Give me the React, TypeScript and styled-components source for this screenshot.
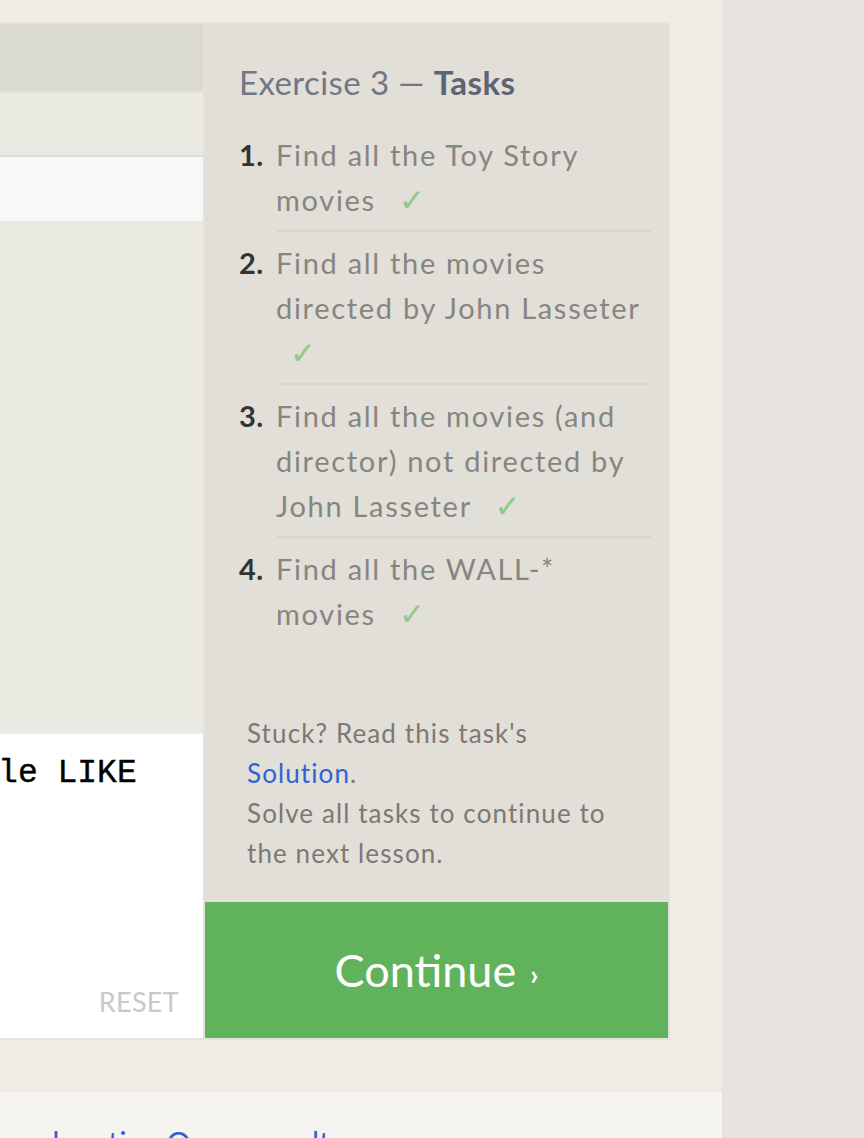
import React from "react";
import styled, { createGlobalStyle } from "styled-components";

const Global = createGlobalStyle`
  html, body { margin: 0; padding: 0; }
  body {
    background: #e6e2df;
    font-family: Lato, "Open Sans", sans-serif;
    overflow: hidden;
    width: 864px;
    height: 1138px;
  }
`;

const Page = styled.div`
  display: flex;
  width: 1360px;
  margin-left: -638px;
`;

const Column = styled.div`
  width: 1360px;
  display: flex;
  flex-direction: column;
`;

const Exercise = styled.section`
  background: #efece5;
  padding: 22px 52px 52px 20px;
  border-bottom-right-radius: 6px;
`;

const Box = styled.div`
  display: grid;
  grid-template-columns: 1fr 463px;
  gap: 2px;
  padding: 2px;
  background: #e4e2db;
`;

const LeftPane = styled.div`
  display: flex;
  flex-direction: column;
  background: #eae9e2;
  overflow: hidden;
`;

const TableHead = styled.div`
  height: 67px;
  background: #dadad3;
  border-bottom: 2px solid #e2e1dc;
`;

const TableRow = styled.div<{ $light?: boolean }>`
  height: 62px;
  background: ${(p) => (p.$light ? "#f8f8f8" : "#eae9e2")};
  border-bottom: 2px solid ${(p) => (p.$light ? "transparent" : "#dcdcd8")};
`;

const Filler = styled.div`
  height: 513px;
`;

const Editor = styled.div`
  height: 304px;
  background: #ffffff;
  display: flex;
  flex-direction: column;
  padding: 20px 24px 20px 20px;
  box-sizing: border-box;
`;

const Code = styled.pre`
  margin: 0;
  font-family: "Liberation Mono", "Courier New", monospace;
  font-size: 33px;
  line-height: 40px;
  color: #000;
  flex: 1;
  -webkit-text-stroke: 0.4px #000;
`;

const Reset = styled.div`
  align-self: flex-end;
  font-family: Lato, sans-serif;
  font-size: 27px;
  line-height: 32px;
  color: #c9c9c9;
  letter-spacing: 0.3px;
`;

const Panel = styled.aside`
  background: #e1dfd7;
  display: flex;
  flex-direction: column;
`;

const Heading = styled.h2`
  margin: 0;
  padding: 36px 16px 0 34px;
  font-size: 33px;
  line-height: 44px;
  font-weight: 400;
  letter-spacing: 0.4px;
  color: #717787;
`;

const Strong = styled.span`
  font-weight: 700;
  color: #5e6473;
`;

const Tasks = styled.ol`
  list-style: none;
  margin: 0;
  padding: 20px 16px 0 34px;
`;

const Task = styled.li`
  display: flex;
  font-size: 29px;
  line-height: 45px;
  letter-spacing: 1.7px;
`;

const Num = styled.span`
  width: 37px;
  flex: none;
  padding-top: 8px;
  font-weight: 700;
  letter-spacing: 0.5px;
  color: #333333;
`;

const TaskBody = styled.div<{ $last?: boolean }>`
  flex: 1;
  color: #878580;
  padding: 8px 0 7px;
  border-bottom: ${(p) => (p.$last ? "none" : "2px solid #d9d6cb")};
`;

const Check = styled.span`
  display: inline-block;
  margin-left: 14px;
  color: #8fca8c;
  font-family: "DejaVu Sans", sans-serif;
  font-size: 31px;
  letter-spacing: 0;
`;

const Help = styled.p`
  margin: 69px 0 0;
  padding: 0 42px 0 42px;
  font-size: 26px;
  line-height: 40px;
  letter-spacing: 1.1px;
  color: #7d7874;
`;

const Link = styled.a`
  color: #2d63d6;
  text-decoration: none;
`;

const Continue = styled.button`
  margin-top: auto;
  height: 136px;
  border: none;
  background: #61b35b;
  color: #ffffff;
  font-family: Lato, sans-serif;
  font-size: 45px;
  display: flex;
  align-items: center;
  justify-content: center;
  gap: 14px;
`;

const Chevron = styled.span`
  font-size: 28px;
  font-weight: 700;
  position: relative;
  top: 4px;
`;

const Next = styled.section`
  background: #f5f4f0;
  height: 46px;
  overflow: hidden;
  padding: 32px 0 0 533px;
  box-sizing: border-box;
`;

const NextTitle = styled.h3`
  margin: 0;
  font-size: 30px;
  font-weight: 400;
  color: #2d63d6;
  line-height: 36px;
  white-space: nowrap;
`;

const tasks: { text: string }[] = [
  { text: "Find all the Toy Story movies" },
  { text: "Find all the movies directed by John Lasseter" },
  { text: "Find all the movies (and director) not directed by John Lasseter" },
  { text: "Find all the WALL-* movies" },
];

export default function App() {
  return (
    <>
      <Global />
      <Page>
        <Column>
          <Exercise>
            <Box>
              <LeftPane>
                <TableHead />
                <TableRow />
                <TableRow $light />
                <Filler />
                <Editor>
                  <Code>SELECT * FROM movies WHERE title LIKE</Code>
                  <Reset>RESET</Reset>
                </Editor>
              </LeftPane>
              <Panel>
                <Heading>
                  Exercise 3 — <Strong>Tasks</Strong>
                </Heading>
                <Tasks>
                  {tasks.map((t, i) => (
                    <Task key={i}>
                      <Num>{i + 1}.</Num>
                      <TaskBody $last={i === tasks.length - 1}>
                        {t.text} <Check>✓</Check>
                      </TaskBody>
                    </Task>
                  ))}
                </Tasks>
                <Help>
                  Stuck? Read this task's <Link href="#">Solution</Link>.
                  <br />
                  Solve all tasks to continue to the next lesson.
                </Help>
                <Continue>
                  Continue <Chevron>›</Chevron>
                </Continue>
              </Panel>
            </Box>
          </Exercise>
          <Next>
            <NextTitle>Filtering and sorting Query results</NextTitle>
          </Next>
        </Column>
      </Page>
    </>
  );
}
